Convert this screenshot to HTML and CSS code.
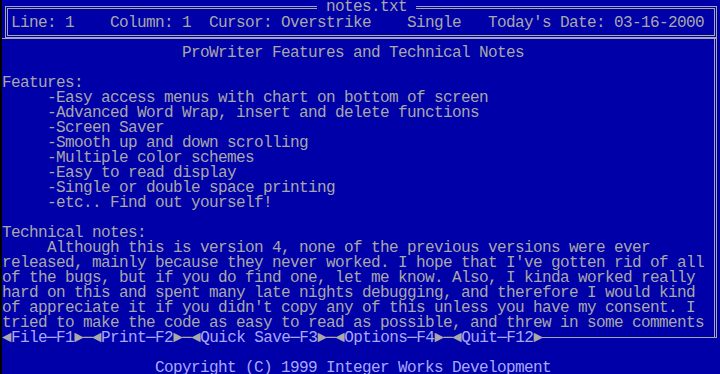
FILE: index.html
```html
<!DOCTYPE html>
<html lang="en">
<head>
    <meta charset="utf-8">
    <title>notes.txt - ProWriter</title>
    <link rel="stylesheet" href="styles.css">
</head>
<body>
<div class="screen">
    <header class="status-box">
        <span class="file-title"> notes.txt </span>
        <div class="status-line">Line: 1    Column: 1  Cursor: Overstrike    Single   Today's Date: 03-16-2000</div>
    </header>

    <main class="doc-box">
        <div class="doc-text">
            <h1 class="doc-heading">ProWriter Features and Technical Notes</h1>
            <div class="blank"></div>
            <p class="section">Features:</p>
            <ul class="features">
                <li>-Easy access menus with chart on bottom of screen</li>
                <li>-Advanced Word Wrap, insert and delete functions</li>
                <li>-Screen Saver</li>
                <li>-Smooth up and down scrolling</li>
                <li>-Multiple color schemes</li>
                <li>-Easy to read display</li>
                <li>-Single or double space printing</li>
                <li>-etc.. Find out yourself!</li>
            </ul>
            <div class="blank"></div>
            <p class="section">Technical notes:</p>
            <div class="notes">
                <div class="indent">Although this is version 4, none of the previous versions were ever</div>
                <div>released, mainly because they never worked. I hope that I've gotten rid of all</div>
                <div>of the bugs, but if you do find one, let me know. Also, I kinda worked really</div>
                <div>hard on this and spent many late nights debugging, and therefore I would kind</div>
                <div>of appreciate it if you didn't copy any of this unless you have my consent. I</div>
                <div>tried to make the code as easy to read as possible, and threw in some comments</div>
            </div>
        </div>

        <nav class="menu-bar">
            <span class="arrow">&#9668;</span><span class="menu-label">File&#9472;F1</span><span class="arrow">&#9658;</span><span class="link">&#9472;</span>
            <span class="arrow">&#9668;</span><span class="menu-label">Print&#9472;F2</span><span class="arrow">&#9658;</span><span class="link">&#9472;</span>
            <span class="arrow">&#9668;</span><span class="menu-label">Quick Save&#9472;F3</span><span class="arrow">&#9658;</span><span class="link">&#9472;</span>
            <span class="arrow">&#9668;</span><span class="menu-label">Options&#9472;F4</span><span class="arrow">&#9658;</span><span class="link">&#9472;</span>
            <span class="arrow">&#9668;</span><span class="menu-label">Quit&#9472;F12</span><span class="arrow">&#9658;</span>
            <span class="menu-rest"></span>
        </nav>
    </main>

    <footer class="copyright">Copyright (C) 1999 Integer Works Development</footer>
</div>
</body>
</html>
```

FILE: styles.css
```css
html, body {
    margin: 0;
    background: #000;
    overflow: hidden;
}
.screen {
    margin-left: 2px;
    width: 718px;
    height: 374px;
    overflow: hidden;
    background: #0000a8;
    color: #a8a8a8;
    font-family: "Liberation Mono", "DejaVu Sans Mono", monospace;
    font-size: 16px;
    letter-spacing: -0.6px;
    line-height: 15px;
}
.status-line,
.file-title,
.doc-heading,
.section,
.features li,
.notes div,
.menu-bar span,
.copyright {
    white-space: pre;
}

/* top status box */
.status-box {
    position: relative;
    margin: 6px 3px 0 3px;
    border: 3px double #a8a8a8;
    padding: 7px 0 4px 3px;
}
.file-title {
    position: absolute;
    top: -9px;
    left: 309px;
    background: #0000a8;
}

/* document area */
.doc-box {
    margin-right: 3px;
}
.doc-text {
    border-top: 1px solid #a8a8a8;
    border-right: 3px double #a8a8a8;
    padding-top: 7px;
}
.doc-heading {
    margin: 0;
    font-size: inherit;
    font-weight: normal;
    line-height: 15px;
    padding-left: 180px;
}
.blank {
    height: 15px;
}
.section {
    margin: 0;
}
.features {
    margin: 0;
    padding: 0 0 0 45px;
    list-style: none;
}
.indent {
    padding-left: 45px;
}

/* menu bar on the bottom border */
.menu-bar {
    display: flex;
    height: 15px;
}
.menu-bar > span {
    flex: none;
}
.menu-label {
    color: #a8a8fc;
}
.menu-bar > .menu-rest {
    flex: 1 1 auto;
    align-self: flex-start;
    height: 6px;
    border-bottom: 1px solid #a8a8a8;
    border-right: 3px double #a8a8a8;
}

.copyright {
    margin-top: 15px;
    padding-left: 153px;
    color: #a8a8fc;
}
```
